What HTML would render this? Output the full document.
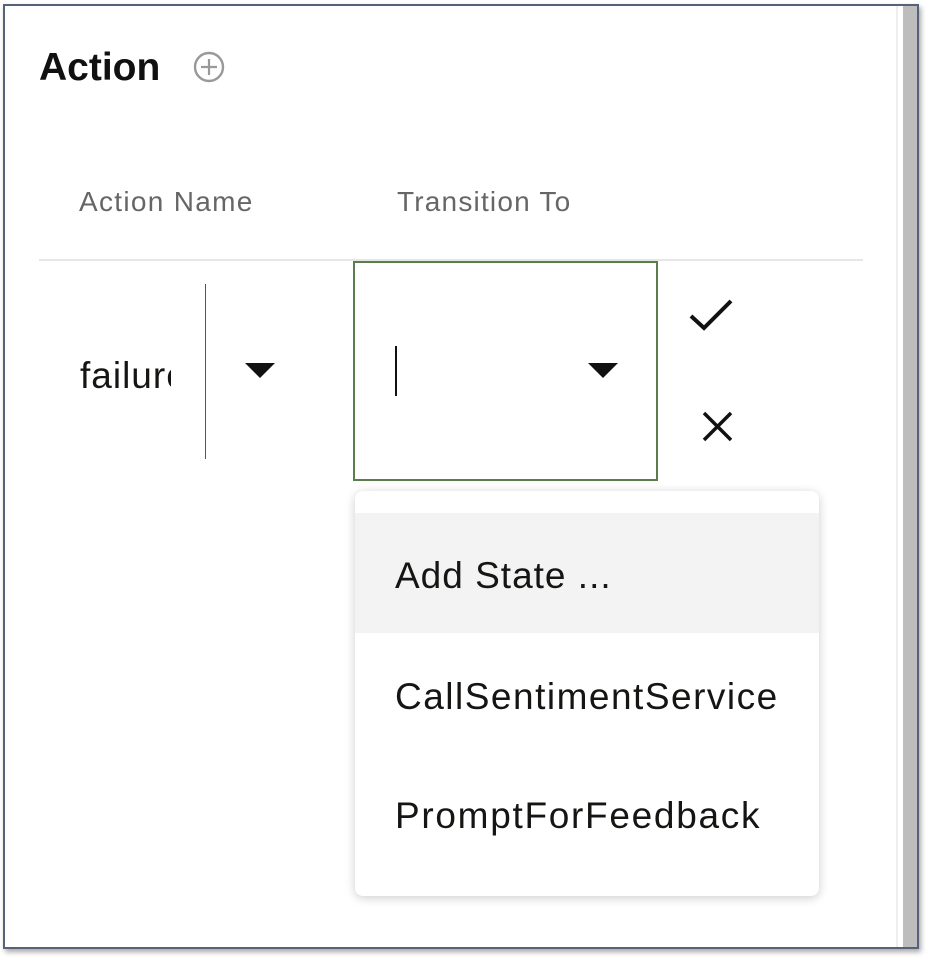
<!DOCTYPE html><html><head><style>
body{margin:0;width:930px;height:962px;background:#fff;position:relative;font-family:"Liberation Sans",sans-serif;overflow:hidden}
.frame{position:absolute;left:3px;top:4px;width:912px;height:941px;border:2px solid #56627a;box-shadow:2px 3px 5px rgba(0,0,0,.35);background:#fff;overflow:hidden}
.abs{position:absolute}
</style></head><body>
<div class="frame">
 <div class="abs" style="left:891px;top:0;width:2px;height:941px;background:#eee"></div>
 <div class="abs" style="left:898px;top:0;width:14px;height:941px;background:#bdbdbd"></div>
 <div class="abs" style="left:34px;top:40px;font-size:39px;font-weight:bold;color:#111;letter-spacing:0px">Action</div>
 <svg class="abs" style="left:187px;top:44px" width="34" height="34" viewBox="0 0 34 34"><circle cx="17" cy="17" r="14" fill="none" stroke="#999" stroke-width="2.4"/><path d="M17 9v16M9 17h16" stroke="#999" stroke-width="2.2"/></svg>
 <div class="abs" style="left:74px;top:180px;font-size:28px;color:#666;letter-spacing:1.3px">Action Name</div>
 <div class="abs" style="left:392px;top:180px;font-size:28px;color:#666;letter-spacing:1.2px">Transition To</div>
 <div class="abs" style="left:34px;top:253px;width:824px;height:2px;background:#e6e6e6"></div>
 <div class="abs" style="left:75px;top:349px;font-size:37px;color:#161513;width:91px;overflow:hidden;white-space:nowrap;letter-spacing:1px">failure</div>
 <div class="abs" style="left:200px;top:278px;width:1px;height:175px;background:#555"></div>
 <svg class="abs" style="left:240px;top:357px" width="30" height="16"><path d="M0 0h30L15 15z" fill="#111"/></svg>
 <div class="abs" style="left:348px;top:255px;width:301px;height:216px;border:2px solid #5b7c4b"></div>
 <div class="abs" style="left:390px;top:340px;width:2px;height:50px;background:#111"></div>
 <svg class="abs" style="left:583px;top:357px" width="30" height="16"><path d="M0 0h30L15 15z" fill="#111"/></svg>
 <svg class="abs" style="left:683px;top:290px" width="50" height="40"><path d="M3 20l13 12 27-27" fill="none" stroke="#111" stroke-width="4"/></svg>
 <svg class="abs" style="left:696px;top:404px" width="34" height="34"><path d="M3 3l27 27M30 3L3 30" stroke="#111" stroke-width="3.5"/></svg>
 <div class="abs" style="left:350px;top:485px;width:464px;height:405px;background:#fff;border-radius:8px;box-shadow:0 2px 10px rgba(0,0,0,.2);overflow:hidden">
  <div style="position:absolute;left:0;top:22px;width:464px;height:120px;background:#f3f3f3"></div>
  <div style="position:absolute;left:40px;top:64px;font-size:37px;color:#161513;letter-spacing:1px">Add State ...</div>
  <div style="position:absolute;left:40px;top:185px;font-size:37px;color:#161513;letter-spacing:1.5px">CallSentimentService</div>
  <div style="position:absolute;left:40px;top:304px;font-size:37px;color:#161513;letter-spacing:1.7px">PromptForFeedback</div>
 </div>
</div>
</body></html>
